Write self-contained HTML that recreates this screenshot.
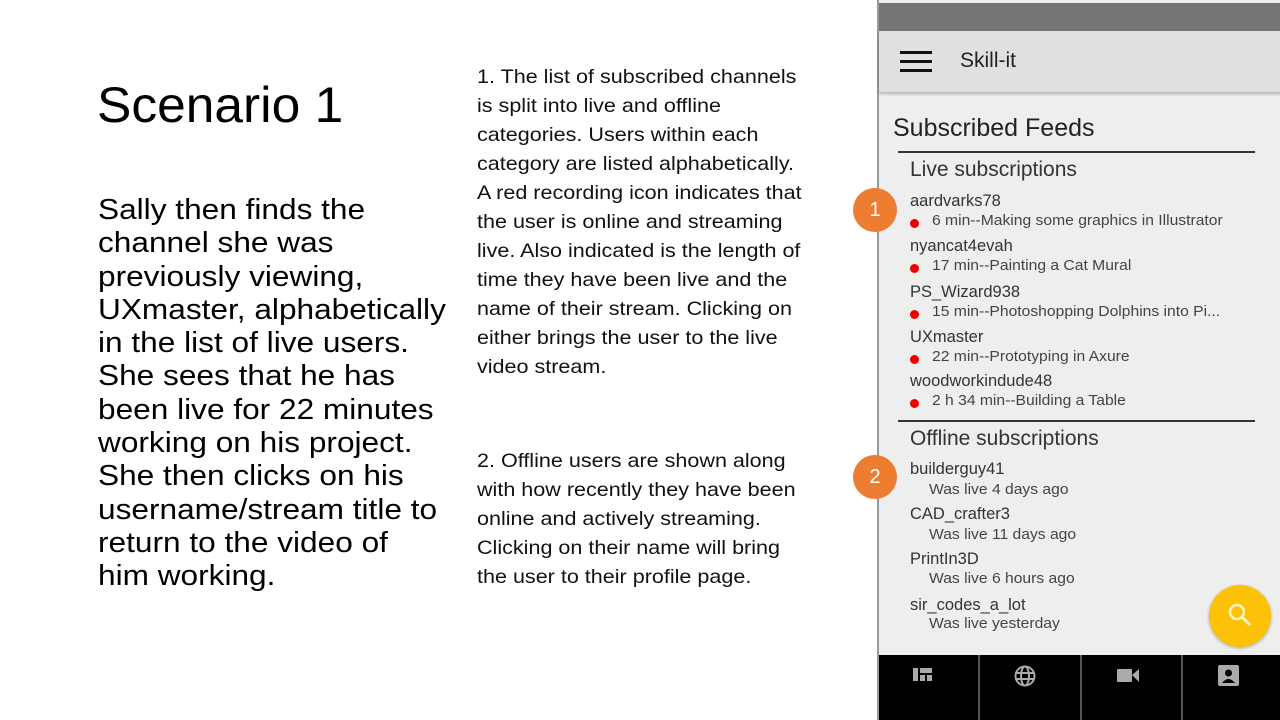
<!DOCTYPE html>
<html><head><meta charset="utf-8"><style>
body{margin:0;width:1280px;height:720px;background:#fff;position:relative;overflow:hidden;font-family:"Liberation Sans",sans-serif;color:#000}
.a{position:absolute;white-space:nowrap;transform-origin:0 0}
#title{left:97px;top:76px;font-size:50px;transform:scaleX(1.03)}
#left{left:98px;top:194px;font-size:29px;line-height:33.3px;transform:scaleX(1.09)}
.mid{left:477px;font-size:19.5px;line-height:29px;color:#111;transform:scaleX(1.105)}
#phone{position:absolute;left:877px;top:0;width:403px;height:720px;background:#eee;border-left:2px solid #999;box-sizing:border-box}
.n{font-size:16.5px;color:#333}
.s{font-size:14.5px;color:#444;transform:scaleX(1.08)}
.dot{width:9px;height:9px;border-radius:50%;background:#e00;position:absolute}
.badge{position:absolute;width:44px;height:44px;border-radius:50%;background:#ed7d31;color:#fff;font-size:20px;text-align:center;line-height:44px;left:853px}
.hr{position:absolute;left:898px;width:357px;height:1.5px;background:#333}
</style></head><body>
<div class="a" id="title">Scenario 1</div>
<div class="a" id="left">Sally then finds the<br>channel she was<br>previously viewing,<br>UXmaster, alphabetically<br>in the list of live users.<br>She sees that he has<br>been live for 22 minutes<br>working on his project.<br>She then clicks on his<br>username/stream title to<br>return to the video of<br>him working.</div>
<div class="a mid" style="top:63px">1. The list of subscribed channels<br>is split into live and offline<br>categories. Users within each<br>category are listed alphabetically.<br>A red recording icon indicates that<br>the user is online and streaming<br>live. Also indicated is the length of<br>time they have been live and the<br>name of their stream. Clicking on<br>either brings the user to the live<br>video stream.</div>
<div class="a mid" style="top:447px">2. Offline users are shown along<br>with how recently they have been<br>online and actively streaming.<br>Clicking on their name will bring<br>the user to their profile page.</div>

<div id="phone">
<div style="position:absolute;left:0;top:3px;width:403px;height:28px;background:#757575"></div>
<div style="position:absolute;left:0;top:31px;width:403px;height:61px;background:#e0e0e0;box-shadow:0 2px 3px rgba(0,0,0,.25)"></div>
<div style="position:absolute;left:21px;top:51px;width:32px;height:3px;background:#111;box-shadow:0 9px 0 #111,0 18px 0 #111"></div>
<div class="a" style="left:81px;top:49px;font-size:21px;color:#222">Skill-it</div>
<div style="position:absolute;left:0;top:655px;width:403px;height:65px;display:flex;gap:2px;background:#555">
<div style="flex:1;background:#000"></div><div style="flex:1;background:#000"></div><div style="flex:1;background:#000"></div><div style="flex:1;background:#000"></div></div>
</div>
<div class="a" style="left:893px;top:114px;font-size:25px;color:#222">Subscribed Feeds</div>
<div class="hr" style="top:151px;left:898px"></div>
<div class="a" style="left:910px;top:158px;font-size:21px;color:#333">Live subscriptions</div>
<div class="a n" style="left:910px;top:192px">aardvarks78</div><div class="dot" style="left:910px;top:219px"></div><div class="a s" style="left:932px;top:213px">6 min--Making some graphics in Illustrator</div>
<div class="a n" style="left:910px;top:237px">nyancat4evah</div><div class="dot" style="left:910px;top:264px"></div><div class="a s" style="left:932px;top:258px">17 min--Painting a Cat Mural</div>
<div class="a n" style="left:910px;top:283px">PS_Wizard938</div><div class="dot" style="left:910px;top:310px"></div><div class="a s" style="left:932px;top:304px">15 min--Photoshopping Dolphins into Pi...</div>
<div class="a n" style="left:910px;top:328px">UXmaster</div><div class="dot" style="left:910px;top:355px"></div><div class="a s" style="left:932px;top:349px">22 min--Prototyping in Axure</div>
<div class="a n" style="left:910px;top:372px">woodworkindude48</div><div class="dot" style="left:910px;top:399px"></div><div class="a s" style="left:932px;top:393px">2 h 34 min--Building a Table</div>
<div class="hr" style="top:420px;left:898px"></div>
<div class="a" style="left:910px;top:427px;font-size:21px;color:#333">Offline subscriptions</div>
<div class="a n" style="left:910px;top:460px">builderguy41</div><div class="a s" style="left:929px;top:482px">Was live 4 days ago</div>
<div class="a n" style="left:910px;top:505px">CAD_crafter3</div><div class="a s" style="left:929px;top:527px">Was live 11 days ago</div>
<div class="a n" style="left:910px;top:550px">PrintIn3D</div><div class="a s" style="left:929px;top:571px">Was live 6 hours ago</div>
<div class="a n" style="left:910px;top:596px">sir_codes_a_lot</div><div class="a s" style="left:929px;top:616px">Was live yesterday</div>
<div class="badge" style="top:188px">1</div>
<div class="badge" style="top:455px">2</div>
<div style="position:absolute;left:1209px;top:585px;width:62px;height:62px;border-radius:50%;background:#fdc107;box-shadow:0 1px 3px rgba(0,0,0,.3)"></div>
<svg class="a" style="left:1226px;top:601px" width="28" height="28" viewBox="0 0 28 28"><circle cx="11" cy="11" r="7" fill="none" stroke="#fff3c0" stroke-width="2.5"/><line x1="16" y1="16" x2="24" y2="24" stroke="#fff3c0" stroke-width="3"/></svg>
<svg class="a" style="left:913px;top:667px" width="20" height="16"><rect x="0" y="1" width="5" height="13" fill="#aaa"/><rect x="7" y="1" width="12" height="5" fill="#aaa"/><rect x="7" y="8" width="5" height="6" fill="#aaa"/><rect x="14" y="8" width="5" height="6" fill="#aaa"/></svg>
<svg class="a" style="left:1014px;top:665px" width="22" height="22" viewBox="0 0 22 22" fill="none" stroke="#aaa" stroke-width="2"><circle cx="11" cy="11" r="9.5"/><ellipse cx="11" cy="11" rx="4" ry="9.5"/><line x1="1.5" y1="8" x2="20.5" y2="8"/><line x1="1.5" y1="14" x2="20.5" y2="14"/></svg>
<svg class="a" style="left:1117px;top:668px" width="24" height="16"><rect x="0" y="1" width="15" height="13" rx="1" fill="#aaa"/><polygon points="15,7 22,1 22,14" fill="#aaa"/></svg>
<svg class="a" style="left:1218px;top:665px" width="22" height="22"><rect x="0" y="0" width="21" height="21" rx="2" fill="#aaa"/><circle cx="10.5" cy="8" r="3.5" fill="#000"/><path d="M4 18 Q10.5 10 17 18Z" fill="#000"/></svg>
</body></html>
